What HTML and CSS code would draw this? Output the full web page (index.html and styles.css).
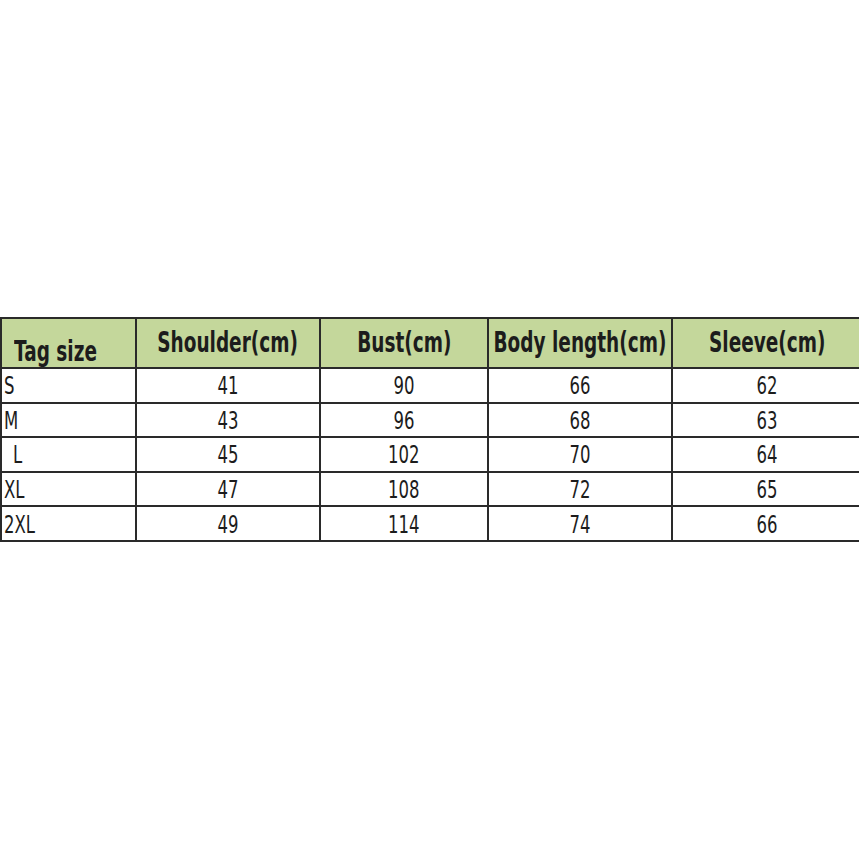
FILE: index.html
```html
<!DOCTYPE html>
<html>
<head>
<meta charset="utf-8">
<link rel="stylesheet" href="styles.css">
</head>
<body>
<div class="page">
  <table class="sizes">
    <colgroup>
      <col class="c1"><col class="c2"><col class="c3"><col class="c4"><col class="c5">
    </colgroup>
    <thead>
      <tr>
        <th class="first"><span class="t tl">Tag size</span></th>
        <th><span class="t">Shoulder(cm)</span></th>
        <th><span class="t">Bust(cm)</span></th>
        <th><span class="t">Body length(cm)</span></th>
        <th><span class="t">Sleeve(cm)</span></th>
      </tr>
    </thead>
    <tbody>
      <tr><td class="first"><span class="t tl">S</span></td><td><span class="t">41</span></td><td><span class="t">90</span></td><td><span class="t">66</span></td><td><span class="t">62</span></td></tr>
      <tr><td class="first"><span class="t tl">M</span></td><td><span class="t">43</span></td><td><span class="t">96</span></td><td><span class="t">68</span></td><td><span class="t">63</span></td></tr>
      <tr><td class="first"><span class="t tl pad">L</span></td><td><span class="t">45</span></td><td><span class="t">102</span></td><td><span class="t">70</span></td><td><span class="t">64</span></td></tr>
      <tr><td class="first"><span class="t tl">XL</span></td><td><span class="t">47</span></td><td><span class="t">108</span></td><td><span class="t">72</span></td><td><span class="t">65</span></td></tr>
      <tr><td class="first"><span class="t tl">2XL</span></td><td><span class="t">49</span></td><td><span class="t">114</span></td><td><span class="t">74</span></td><td><span class="t">66</span></td></tr>
    </tbody>
  </table>
</div>
</body>
</html>
```
FILE: styles.css
```css
html, body {
  margin: 0;
  padding: 0;
  background: #ffffff;
}
.page {
  width: 859px;
  height: 859px;
  overflow: hidden;
  padding-top: 317px;
  box-sizing: border-box;
}
.sizes {
  border-collapse: separate;
  border-spacing: 0;
  table-layout: fixed;
  width: 863px;
  border-top: 2px solid #2a2a2a;
  border-left: 2px solid #2a2a2a;
  font-family: "DejaVu Sans", Verdana, sans-serif;
  color: #1c1c1c;
}
.c1 { width: 135px; }
.c2 { width: 184px; }
.c3 { width: 168px; }
.c4 { width: 184px; }
.c5 { width: 190px; }
.sizes th, .sizes td {
  border-right: 2px solid #2a2a2a;
  border-bottom: 2px solid #2a2a2a;
  padding: 0;
  text-align: center;
  overflow: visible;
  white-space: nowrap;
  box-sizing: border-box;
}
.sizes th {
  background: #c4d79b;
  height: 50px;
  font-size: 28px;
  font-weight: bold;
  line-height: 30px;
  vertical-align: middle;
}
.sizes th.first {
  text-align: left;
  vertical-align: bottom;
  padding-left: 12px;
}
.sizes td {
  height: 34.6px;
  font-size: 25px;
  line-height: 26px;
  vertical-align: middle;
  padding-top: 2px;
}
.sizes td.first {
  text-align: left;
  padding-left: 2px;
}
.t {
  display: inline-block;
  transform: scaleX(0.66);
  transform-origin: center;
  margin: 0 -60px;
}
.tl {
  transform-origin: left;
  margin: 0;
}
.tl.pad {
  margin-left: 9px;
}
```
